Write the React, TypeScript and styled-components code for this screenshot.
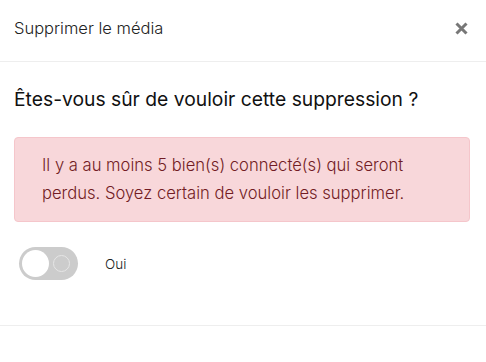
import styled, { createGlobalStyle } from "styled-components";

const GlobalStyle = createGlobalStyle`
  *, *::before, *::after {
    box-sizing: border-box;
  }
  body {
    margin: 0;
    background: #fff;
    font-family: Inter, "Noto Sans", sans-serif;
  }
`;

export default function App() {
  return (
    <>
      <GlobalStyle />
      <Modal>
        <Header>
          <Title>Supprimer le média</Title>
          <CloseBtn aria-label="Fermer">
            <svg width="13" height="13" viewBox="0 0 13 13">
              <path
                d="M1.5 1.5 L11.5 11.5 M11.5 1.5 L1.5 11.5"
                stroke="#777"
                strokeWidth="3"
              />
            </svg>
          </CloseBtn>
        </Header>
        <Body>
          <Question>Êtes-vous sûr de vouloir cette suppression ?</Question>
          <Alert>
            Il y a au moins 5 bien(s) connecté(s) qui seront perdus. Soyez
            certain de vouloir les supprimer.
          </Alert>
          <SwitchRow>
            <Switch>
              <Knob />
              <Ring />
            </Switch>
            <SwitchLabel>Oui</SwitchLabel>
          </SwitchRow>
        </Body>
        <Footer />
      </Modal>
    </>
  );
}

const Modal = styled.div`
  width: 486px;
  height: 362px;
  display: flex;
  flex-direction: column;
  background: #fff;
  overflow: hidden;
`;

const Header = styled.div`
  display: flex;
  align-items: center;
  justify-content: space-between;
  height: 62px;
  padding: 0 18px 0 14px;
  border-bottom: 1px solid #eeeeee;
`;

const Title = styled.h5`
  margin: -6px 0 0;
  font-size: 16.5px;
  font-weight: 300;
  color: #222;
`;

const CloseBtn = styled.button`
  border: 0;
  background: none;
  padding: 0;
  display: flex;
  cursor: pointer;
  margin-top: -4px;
`;

const Body = styled.div`
  display: flex;
  flex-direction: column;
  padding: 24px 16px 0 14px;
  height: 264px;
  border-bottom: 1px solid #eeeeee;
`;

const Question = styled.h4`
  margin: 0 0 24px;
  font-size: 19.3px;
  font-weight: 400;
  line-height: 27px;
  color: #111;
`;

const Alert = styled.div`
  background: #f8d7da;
  border: 1px solid #f5c6cb;
  border-radius: 4px;
  color: #721c24;
  font-size: 16.6px;
  font-weight: 300;
  line-height: 27.5px;
  padding: 14px 40px 14px 27px;
`;

const SwitchRow = styled.div`
  display: flex;
  align-items: center;
  gap: 27px;
  margin: 25px 0 0 5px;
`;

const Switch = styled.div`
  position: relative;
  width: 59px;
  height: 33px;
  border-radius: 17px;
  background: #cccccc;
  flex-shrink: 0;
`;

const Knob = styled.span`
  position: absolute;
  top: 3px;
  left: 3px;
  width: 27px;
  height: 27px;
  border-radius: 50%;
  background: #fff;
`;

const Ring = styled.span`
  position: absolute;
  top: 8px;
  right: 8px;
  width: 17px;
  height: 17px;
  border-radius: 50%;
  border: 1.5px solid #e6e6e6;
`;

const SwitchLabel = styled.span`
  font-size: 13.5px;
  font-weight: 300;
  color: #222;
`;

const Footer = styled.div`
  flex: 1;
`;
